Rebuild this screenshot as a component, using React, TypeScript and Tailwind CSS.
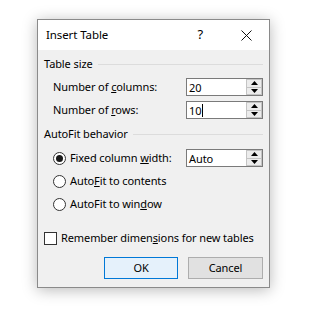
import React from "react";

function Spinner({ value, caret }: { value: string; caret?: boolean }) {
  return (
    <div className="flex h-[18px] w-[77px] border border-[#7a7a7a] bg-white">
      <div className="flex flex-1 items-center pl-[2px] text-[11px] leading-none">
        {value}
        {caret && <span className="ml-px inline-block h-[13px] w-px bg-black" />}
      </div>
      <div className="flex w-[16px] flex-col">
        <div className="flex flex-1 items-center justify-center border border-[#c4c4c4] bg-[#ececec]">
          <svg width="7" height="4" viewBox="0 0 7 4">
            <path d="M0 4 L3.5 0 L7 4 Z" fill="#000" />
          </svg>
        </div>
        <div className="flex flex-1 items-center justify-center border border-t-0 border-[#c4c4c4] bg-[#ececec]">
          <svg width="7" height="4" viewBox="0 0 7 4">
            <path d="M0 0 L3.5 4 L7 0 Z" fill="#000" />
          </svg>
        </div>
      </div>
    </div>
  );
}

function GroupLabel({ children }: { children: React.ReactNode }) {
  return (
    <div className="flex h-[16px] items-center">
      <span className="whitespace-nowrap">{children}</span>
      <div className="ml-[5px] h-px flex-1 bg-[#dcdcdc]" />
    </div>
  );
}

function Radio({ checked }: { checked?: boolean }) {
  return (
    <span className="mr-[4px] flex h-[13px] w-[13px] items-center justify-center rounded-full border border-[#333] bg-white">
      {checked && <span className="h-[7px] w-[7px] rounded-full bg-[#1a1a1a]" />}
    </span>
  );
}

export default function App() {
  return (
    <div
      className="h-[309px] w-[316px] bg-white pl-[37px] pt-[19px] text-[11px] tracking-[-0.1px] text-black"
      style={{ fontFamily: '"Noto Sans", "Open Sans", sans-serif' }}
    >
      <div className="flex h-[269px] w-[233px] flex-col border border-[#8a8a8a] bg-[#f0f0f0] shadow-[0_2px_14px_rgba(0,0,0,0.28)]">
        {/* title bar */}
        <div className="flex h-[30px] items-center bg-white pl-[8px]">
          <span className="flex-1 text-[11.5px]">Insert Table</span>
          <span className="mr-[38px] text-[13px]">?</span>
          <svg width="11" height="11" viewBox="0 0 11 11" className="mr-[17px]">
            <path d="M0.5 0.5 L10.5 10.5 M10.5 0.5 L0.5 10.5" stroke="#111" strokeWidth="1" />
          </svg>
        </div>

        <div className="flex flex-1 flex-col px-[6px] pt-[6px]">
          <GroupLabel>Table size</GroupLabel>
          <div className="mt-[6px] flex h-[18px] items-center pl-[9px]">
            <span className="flex-1">
              Number of <span className="underline">c</span>olumns:
            </span>
            <Spinner value="20" />
          </div>
          <div className="mt-[5px] flex h-[18px] items-center pl-[9px]">
            <span className="flex-1">
              Number of <span className="underline">r</span>ows:
            </span>
            <Spinner value="10" caret />
          </div>

          <div className="mt-[7px]">
            <GroupLabel>AutoFit behavior</GroupLabel>
          </div>
          <div className="mt-[7px] flex h-[18px] items-center pl-[9px]">
            <Radio checked />
            <span className="flex-1">
              Fixed column <span className="underline">w</span>idth:
            </span>
            <Spinner value="Auto" />
          </div>
          <div className="mt-[5px] flex h-[18px] items-center pl-[9px]">
            <Radio />
            <span>
              Auto<span className="underline">F</span>it to contents
            </span>
          </div>
          <div className="mt-[5px] flex h-[18px] items-center pl-[9px]">
            <Radio />
            <span>
              AutoFit to win<span className="underline">d</span>ow
            </span>
          </div>

          <div className="mt-[16px] flex h-[18px] items-center">
            <span className="mr-[4px] h-[13px] w-[13px] border border-[#333] bg-white" />
            <span className="whitespace-nowrap">
              Remember dimen<span className="underline">s</span>ions for new tables
            </span>
          </div>

          <div className="mt-[10px] flex justify-end gap-[10px]">
            <button className="h-[22px] w-[74px] border border-[#0078d7] bg-[#e5f1fb]">OK</button>
            <button className="h-[22px] w-[75px] border border-[#adadad] bg-[#e1e1e1]">Cancel</button>
          </div>
        </div>
      </div>
    </div>
  );
}
